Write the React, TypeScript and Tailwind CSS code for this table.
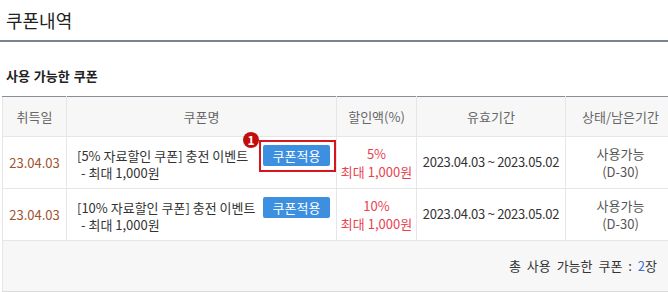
type Coupon = {
  date: string;
  name: string;
  limit: string;
  rate: string;
  from: string;
  to: string;
  status: string;
  dday: string;
  marked?: boolean;
};

const coupons: Coupon[] = [
  {
    date: "23.04.03",
    name: "[5% 자료할인 쿠폰] 충전 이벤트",
    limit: "- 최대 1,000원",
    rate: "5%",
    from: "2023.04.03",
    to: "2023.05.02",
    status: "사용가능",
    dday: "(D-30)",
    marked: true,
  },
  {
    date: "23.04.03",
    name: "[10% 자료할인 쿠폰] 충전 이벤트",
    limit: "- 최대 1,000원",
    rate: "10%",
    from: "2023.04.03",
    to: "2023.05.02",
    status: "사용가능",
    dday: "(D-30)",
  },
];

const headers = ["취득일", "쿠폰명", "할인액(%)", "유효기간", "상태/남은기간"];

function ApplyButton({ marked }: { marked?: boolean }) {
  return (
    <span className="relative ml-auto inline-flex shrink-0">
      <button className="h-[21px] w-[67px] rounded-[2px] bg-[#3d8fdf] text-[13px] leading-none text-white">
        쿠폰적용
      </button>
      {marked && (
        <>
          {/* annotation box */}
          <span className="pointer-events-none absolute -left-[4px] -right-[6px] -top-[5px] -bottom-[6px] border-2 border-[#d8141c]" />
          <span className="absolute -left-[20px] -top-[13px] flex h-[16px] w-[16px] items-center justify-center rounded-full bg-[#c20d0d] text-[12px] font-bold leading-none text-white">
            1
          </span>
        </>
      )}
    </span>
  );
}

export default function App() {
  return (
    <div
      className="h-[292px] w-[668px] overflow-hidden bg-white text-[#333]"
      style={{ fontFamily: '"Noto Sans CJK KR", "Noto Sans", sans-serif' }}
    >
      <div className="flex h-[40px] items-center px-[6px] text-[18px] text-[#222]">쿠폰내역</div>
      <div className="h-[2px] bg-[#7e848d]" />

      <div className="flex h-[54px] items-end px-[6px] pb-[11px] text-[13px] font-bold text-[#222] [word-spacing:1px]">
        사용 가능한 쿠폰
      </div>

      <div className="pl-[2px]">
        <table className="w-[673px] table-fixed border-collapse text-[13px]">
          <colgroup>
            <col className="w-[64px]" />
            <col className="w-[270px]" />
            <col className="w-[80px]" />
            <col className="w-[149px]" />
            <col className="w-[110px]" />
          </colgroup>
          <thead>
            <tr className="h-[40px] bg-[#f7f7f7]">
              {headers.map((h) => (
                <th
                  key={h}
                  className="border border-[#e6e6e6] border-t-[#888d97] text-center font-normal text-[#666]"
                >
                  {h}
                </th>
              ))}
            </tr>
          </thead>
          <tbody>
            {coupons.map((c, i) => (
              <tr key={i} className="h-[52px]">
                <td className="border border-[#e6e6e6] text-center text-[#a0522d]">{c.date}</td>
                <td className="border border-[#e6e6e6] pl-[10px] pr-[6px] pt-[2px]">
                  <div className="flex items-center gap-[7px] whitespace-nowrap leading-[18px]">
                    <span>{c.name}</span>
                    <ApplyButton marked={c.marked} />
                  </div>
                  <div className="-mt-[2px] pl-[4px] leading-[18px]">{c.limit}</div>
                </td>
                <td className="border border-[#e6e6e6] text-center leading-[18px] text-[#e8424e]">
                  <div>{c.rate}</div>
                  <div>최대 1,000원</div>
                </td>
                <td className="whitespace-nowrap border border-[#e6e6e6] text-center tracking-[-0.3px]">
                  {c.from} <span style={{ fontFamily: '"Noto Sans", sans-serif' }}>~</span> {c.to}
                </td>
                <td className="border border-[#e6e6e6] text-center leading-[18px] text-[#555]">
                  <div>{c.status}</div>
                  <div>{c.dday}</div>
                </td>
              </tr>
            ))}
            <tr className="h-[51px] bg-[#f7f7f7]">
              <td
                colSpan={5}
                className="border border-[#e6e6e6] border-b-[#dcdcdc] pr-[18px] text-right text-[#333] [word-spacing:3px]"
              >
                총 사용 가능한 쿠폰 : <span className="text-[#3b6fd6]">2</span>장
              </td>
            </tr>
          </tbody>
        </table>
      </div>
    </div>
  );
}
